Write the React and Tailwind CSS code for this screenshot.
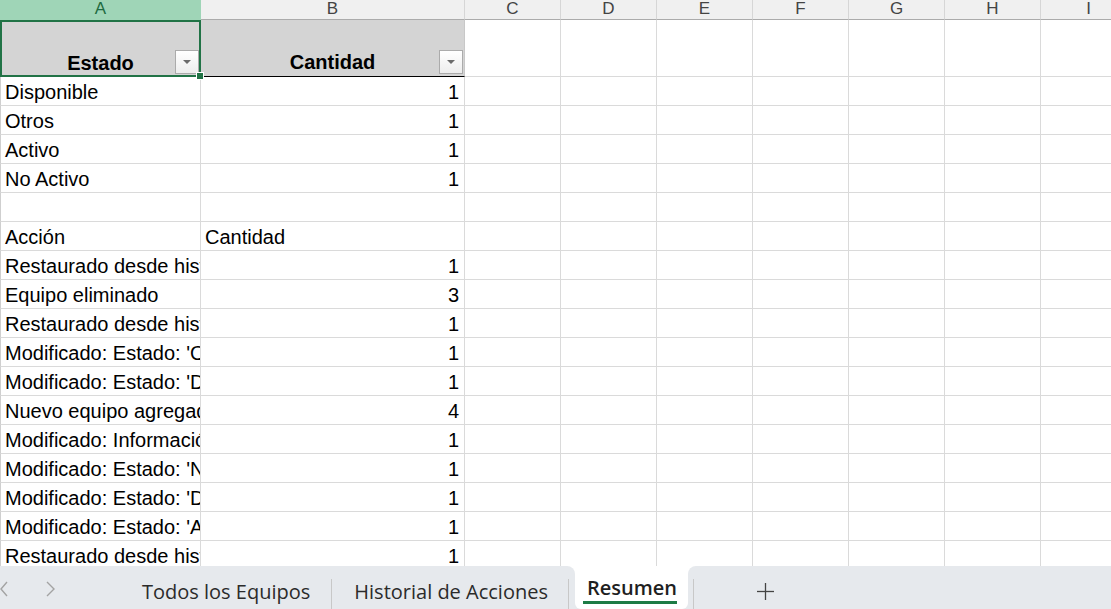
import React from "react";

const COLS = ["A", "B", "C", "D", "E", "F", "G", "H", "I"];

const ROWS = [
  ["Disponible", "1"],
  ["Otros", "1"],
  ["Activo", "1"],
  ["No Activo", "1"],
  ["", ""],
  ["Acción", "Cantidad", true],
  ["Restaurado desde historial", "1"],
  ["Equipo eliminado", "3"],
  ["Restaurado desde historial", "1"],
  ["Modificado: Estado: 'Otros' → 'Activo'", "1"],
  ["Modificado: Estado: 'Disponible' → 'Otros'", "1"],
  ["Nuevo equipo agregado", "4"],
  ["Modificado: Información", "1"],
  ["Modificado: Estado: 'No Activo' → 'Activo'", "1"],
  ["Modificado: Estado: 'Disponible' → 'Activo'", "1"],
  ["Modificado: Estado: 'Activo' → 'Otros'", "1"],
  ["Restaurado desde historial", "1"],
];

function FilterButton() {
  return (
    <div className="w-[24px] h-[24px] border border-[#ababab] bg-gradient-to-b from-[#ffffff] to-[#ededed] flex items-center justify-center">
      <svg width="10" height="6" viewBox="0 0 10 6">
        <polygon points="1,1 9,1 5,5" fill="#6b6b6b" />
      </svg>
    </div>
  );
}

export default function App() {
  return (
    <div className="w-[1111px] h-[609px] flex flex-col bg-white overflow-hidden font-['Liberation_Sans',Arial,sans-serif] text-black">
      <div className="h-[566px] overflow-hidden shrink-0">
        <div className="grid grid-cols-[201px_264px_repeat(7,96px)] grid-rows-[20px_57px_repeat(17,29px)] w-[1137px]">
          {/* column headers */}
          {COLS.map((c, i) => (
            <div
              key={c}
              className={
                i === 0
                  ? "bg-[#9fd5b7] text-[#1e6b41] border-b border-[#9fd5b7] text-[17px] leading-[17px] flex justify-center"
                  : "bg-[#f0f0f0] text-[#444444] border-r border-b border-r-[#d6d6d6] border-b-[#ababab] text-[17px] leading-[17px] flex justify-center"
              }
            >
              {c}
            </div>
          ))}

          {/* row 1: table header */}
          <div className="relative z-10 bg-[#d4d4d4] border-2 border-[#217346] flex items-end justify-center">
            <span className="font-bold text-[20px] leading-[23px]">Estado</span>
            <div className="absolute right-[0px] bottom-[1px]">
              <FilterButton />
            </div>
            <div className="absolute right-[-5px] bottom-[-5px] w-[8px] h-[8px] bg-[#217346] border border-white"></div>
          </div>
          <div className="relative bg-[#d4d4d4] border-b border-r border-b-black border-r-[#c8c8c8] flex items-end justify-center">
            <span className="font-bold text-[20px] leading-[23px] pb-[2px]">Cantidad</span>
            <div className="absolute right-[1px] bottom-[2px]">
              <FilterButton />
            </div>
          </div>
          {COLS.slice(2).map((c) => (
            <div key={"r1" + c} className="border-r border-b border-[#dadada]"></div>
          ))}

          {/* data rows */}
          {ROWS.map((r, ri) => (
            <React.Fragment key={ri}>
              <div className="border-l border-r border-b border-l-[#cfcfcf] border-r-[#dadada] border-b-[#dadada] overflow-hidden whitespace-nowrap pl-[4px] pt-[2px] text-[20px] leading-[26px]">
                {r[0]}
              </div>
              <div
                className={
                  r[2]
                    ? "border-r border-b border-[#dadada] overflow-hidden whitespace-nowrap pl-[4px] pt-[2px] text-[20px] leading-[26px]"
                    : "border-r border-b border-[#dadada] overflow-hidden whitespace-nowrap pr-[5px] pt-[2px] text-right text-[20px] leading-[26px]"
                }
              >
                {r[1]}
              </div>
              {COLS.slice(2).map((c) => (
                <div key={ri + c} className="border-r border-b border-[#dadada]"></div>
              ))}
            </React.Fragment>
          ))}
        </div>
      </div>

      {/* sheet tabs bar */}
      <div className="h-[43px] flex bg-white font-['Open_Sans',sans-serif] text-[20px] shrink-0">
        <div className="w-[575px] bg-[#e6e9ed] rounded-tr-[8px] flex items-start relative">
          <svg className="mt-[15px] ml-[0px]" width="8" height="16" viewBox="0 0 8 16">
            <polyline points="7,1 1,8 7,15" fill="none" stroke="#a3a3a3" strokeWidth="1.4" />
          </svg>
          <svg className="mt-[15px] ml-[38px]" width="9" height="16" viewBox="0 0 9 16">
            <polyline points="1,1 8,8 1,15" fill="none" stroke="#a3a3a3" strokeWidth="1.4" />
          </svg>
          <span className="ml-[87px] pt-[12px] leading-[27px] text-[#2b2b2b] whitespace-nowrap">Todos los Equipos</span>
          <div className="ml-[21px] mt-[13px] w-[1px] h-[30px] bg-[#c8c8c8]"></div>
          <span className="ml-[22px] pt-[12px] leading-[27px] text-[#2b2b2b] whitespace-nowrap">Historial de Acciones</span>
          <div className="ml-[20px] mt-[13px] w-[1px] h-[30px] bg-[#c8c8c8]"></div>
        </div>
        <div className="w-[113px] bg-[#e6e9ed]">
          <div className="h-full bg-white rounded-b-[6px] relative pl-[12px] pt-[7px]">
            <span className="font-semibold leading-[27px] text-[#1f1f1f] whitespace-nowrap">Resumen</span>
            <div className="absolute left-[8px] top-[35px] w-[94px] h-[3px] bg-[#1e7b45]"></div>
          </div>
        </div>
        <div className="flex-1 bg-[#e6e9ed] rounded-tl-[8px] flex items-start">
          <div className="ml-[5px] mt-[13px] w-[1px] h-[30px] bg-[#c8c8c8]"></div>
          <svg className="ml-[63px] mt-[17px]" width="17" height="17" viewBox="0 0 17 17">
            <line x1="8.5" y1="0" x2="8.5" y2="17" stroke="#444" strokeWidth="1.3" />
            <line x1="0" y1="8.5" x2="17" y2="8.5" stroke="#444" strokeWidth="1.3" />
          </svg>
        </div>
      </div>
    </div>
  );
}
